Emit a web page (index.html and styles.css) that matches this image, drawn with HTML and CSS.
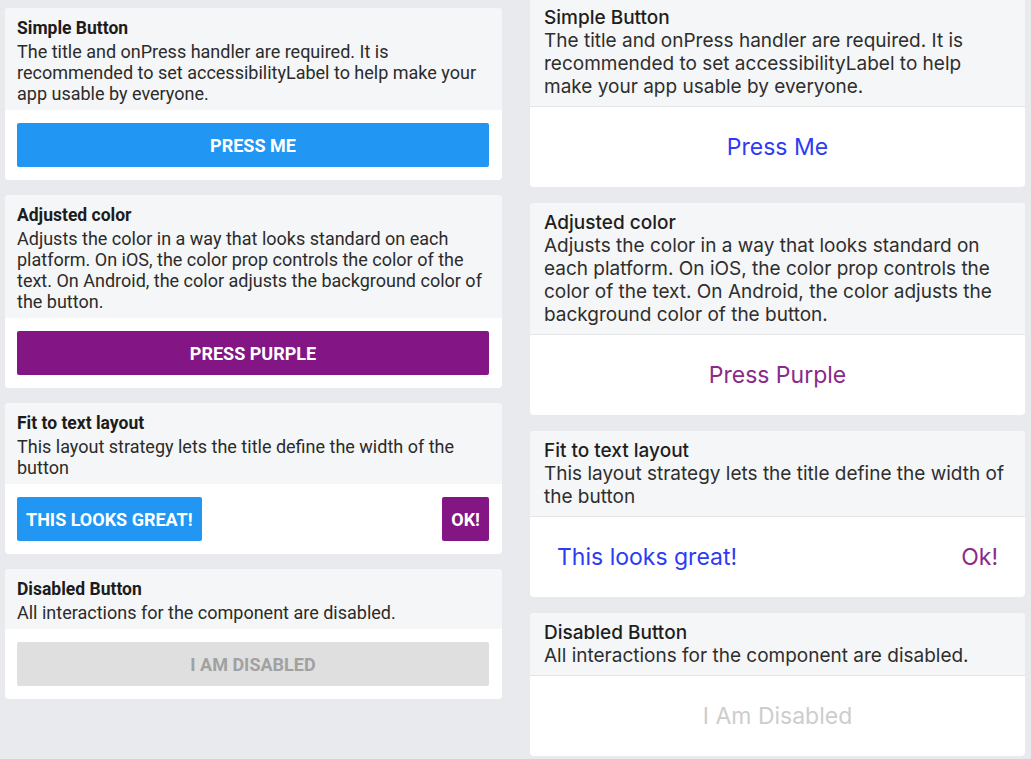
FILE: index.html
```html
<!DOCTYPE html>
<html lang="en">
<head>
<meta charset="utf-8">
<title>Button examples</title>
<link rel="stylesheet" href="styles.css">
</head>
<body>
<div class="page">
  <div class="col android">
    <section class="card">
      <div class="card-head">
        <div class="title">Simple Button</div>
        <div class="desc">The title and onPress handler are required. It is recommended to set accessibilityLabel to help make your app usable by everyone.</div>
      </div>
      <div class="card-body">
        <div class="abtn blue">Press Me</div>
      </div>
    </section>
    <section class="card">
      <div class="card-head">
        <div class="title">Adjusted color</div>
        <div class="desc">Adjusts the color in a way that looks standard on each platform. On iOS, the color prop controls the color of the text. On Android, the color adjusts the background color of the button.</div>
      </div>
      <div class="card-body">
        <div class="abtn purple">Press Purple</div>
      </div>
    </section>
    <section class="card">
      <div class="card-head">
        <div class="title">Fit to text layout</div>
        <div class="desc">This layout strategy lets the title define the width of the button</div>
      </div>
      <div class="card-body row">
        <div class="abtn blue fit">This looks great!</div>
        <div class="abtn purple fit">Ok!</div>
      </div>
    </section>
    <section class="card">
      <div class="card-head">
        <div class="title">Disabled Button</div>
        <div class="desc">All interactions for the component are disabled.</div>
      </div>
      <div class="card-body">
        <div class="abtn disabled">I Am Disabled</div>
      </div>
    </section>
  </div>

  <div class="col ios">
    <section class="card">
      <div class="card-head">
        <div class="title">Simple Button</div>
        <div class="desc">The title and onPress handler are required. It is recommended to set accessibilityLabel to help make your app usable by everyone.</div>
      </div>
      <div class="card-body">
        <div class="ibtn blue">Press Me</div>
      </div>
    </section>
    <section class="card">
      <div class="card-head">
        <div class="title">Adjusted color</div>
        <div class="desc">Adjusts the color in a way that looks standard on each platform. On iOS, the color prop controls the color of the text. On Android, the color adjusts the background color of the button.</div>
      </div>
      <div class="card-body">
        <div class="ibtn purple">Press Purple</div>
      </div>
    </section>
    <section class="card">
      <div class="card-head">
        <div class="title">Fit to text layout</div>
        <div class="desc">This layout strategy lets the title define the width of the button</div>
      </div>
      <div class="card-body row">
        <div class="ibtn blue">This looks great!</div>
        <div class="ibtn purple">Ok!</div>
      </div>
    </section>
    <section class="card">
      <div class="card-head">
        <div class="title">Disabled Button</div>
        <div class="desc">All interactions for the component are disabled.</div>
      </div>
      <div class="card-body">
        <div class="ibtn disabled">I Am Disabled</div>
      </div>
    </section>
  </div>
</div>
</body>
</html>
```

FILE: styles.css
```css
html, body {
  margin: 0;
  padding: 0;
  background: #e9eaed;
}

.page {
  display: grid;
  grid-template-columns: 497px 495px;
  column-gap: 28px;
  padding-left: 5px;
  align-items: start;
}

.col {
  display: flex;
  flex-direction: column;
}

.card {
  background: #fff;
  border-radius: 4px;
  overflow: hidden;
}

/* Android column */
.android {
  padding-top: 8px;
  gap: 15px;
  font-family: Roboto, "Liberation Sans", sans-serif;
}

.android .card-head {
  background: #f5f6f7;
  padding: 7px 12px 6px;
}

.android .title {
  font-size: 17.5px;
  font-weight: 700;
  line-height: 26px;
  color: #1c1c1c;
}

.android .desc {
  font-size: 18px;
  line-height: 21px;
  color: #2b2b2b;
}

.android .card-body {
  padding: 13px 13px 13px 12px;
}

.card-body.row {
  display: flex;
  justify-content: space-between;
}

.abtn {
  height: 44px;
  border-radius: 2px;
  display: flex;
  align-items: center;
  justify-content: center;
  text-transform: uppercase;
  font-size: 18px;
  font-weight: 700;
  color: #fff;
}

.abtn.fit {
  padding: 0 9px;
}

.abtn.blue { background: #2196f3; }
.abtn.purple { background: #841584; }
.abtn.disabled {
  background: #dfdfdf;
  color: #a1a1a1;
}

/* iOS column */
.ios {
  margin-top: -2px;
  gap: 16px;
  font-family: Inter, "Noto Sans", sans-serif;
}

.ios .card-head {
  background: #f5f6f7;
  padding: 8px 14px 8px;
  border-bottom: 1px solid #e4e5e7;
}

.ios .title {
  font-size: 19px;
  font-weight: 500;
  line-height: 23px;
  color: #1e1e1e;
}

.ios .desc {
  font-size: 19px;
  line-height: 23px;
  color: #2e2e2e;
}

.ios .card-body {
  height: 80px;
  padding: 0 27px;
  display: flex;
  align-items: center;
  justify-content: center;
}

.ios .card-body.row {
  justify-content: space-between;
}

.ibtn {
  font-size: 23px;
  line-height: 28px;
}

.ibtn.blue { color: #2d3cf3; }
.ibtn.purple { color: #8a2b8a; }
.ibtn.disabled { color: #cdcdcd; }
```
